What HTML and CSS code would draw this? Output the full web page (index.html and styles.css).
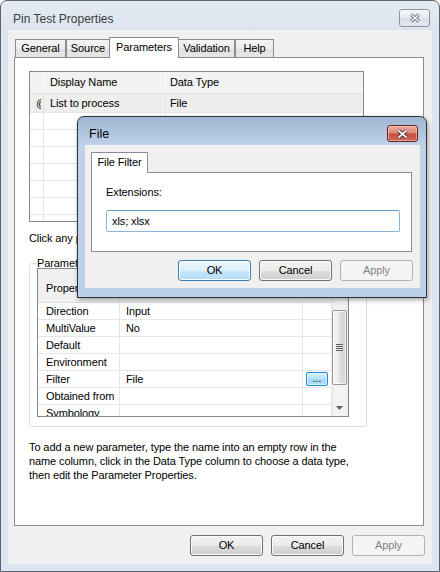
FILE: index.html
```html
<!DOCTYPE html>
<html>
<head>
<meta charset="utf-8">
<title>Pin Test Properties</title>
<link rel="stylesheet" href="styles.css">
</head>
<body>
<div class="window">
  <div class="titlebar">
    <span class="title">Pin Test Properties</span>
    <div class="close-main">
      <svg width="12" height="10" viewBox="0 0 12 10"><path d="M2 1.5 L10 8.5 M10 1.5 L2 8.5" stroke="#6f7780" stroke-width="3.4" fill="none"/><path d="M2 1.5 L10 8.5 M10 1.5 L2 8.5" stroke="#f7f7f7" stroke-width="1.4" fill="none"/></svg>
    </div>
  </div>
  <div class="client">
    <div class="tabs">
      <div class="tab t-general">General</div>
      <div class="tab t-source">Source</div>
      <div class="tab active t-params">Parameters</div>
      <div class="tab t-valid">Validation</div>
      <div class="tab t-help">Help</div>
    </div>
    <div class="panel">
      <div class="ptable">
        <div class="prow head"><div class="c0"></div><div class="c1">Display Name</div><div class="c2">Data Type</div></div>
        <div class="prow sel"><div class="c0"><span class="rowicon">@</span></div><div class="c1">List to process</div><div class="c2">File</div></div>
        <div class="prow"><div class="c0"></div><div class="c1"></div><div class="c2"></div></div>
        <div class="prow"><div class="c0"></div><div class="c1"></div><div class="c2"></div></div>
        <div class="prow"><div class="c0"></div><div class="c1"></div><div class="c2"></div></div>
        <div class="prow"><div class="c0"></div><div class="c1"></div><div class="c2"></div></div>
        <div class="prow"><div class="c0"></div><div class="c1"></div><div class="c2"></div></div>
        <div class="prow"><div class="c0"></div><div class="c1"></div><div class="c2"></div></div>
        <div class="prow"><div class="c0"></div><div class="c1"></div><div class="c2"></div></div>
      </div>
      <div class="hint">Click any parameter above to see its properties below.</div>
      <fieldset class="group">
        <legend>Parameter Properties</legend>
        <div class="pgrid">
          <div class="pg-body">
            <div class="pg-head"><div class="g1">Property</div><div class="g2">Value</div><div class="g3"></div></div>
            <div class="pg-row"><div class="g1">Direction</div><div class="g2">Input</div><div class="g3"></div></div>
            <div class="pg-row"><div class="g1">MultiValue</div><div class="g2">No</div><div class="g3"></div></div>
            <div class="pg-row"><div class="g1">Default</div><div class="g2"></div><div class="g3"></div></div>
            <div class="pg-row"><div class="g1">Environment</div><div class="g2"></div><div class="g3"></div></div>
            <div class="pg-row"><div class="g1">Filter</div><div class="g2">File</div><div class="g3"><span class="ellipsis">...</span></div></div>
            <div class="pg-row"><div class="g1">Obtained from</div><div class="g2"></div><div class="g3"></div></div>
            <div class="pg-row"><div class="g1">Symbology</div><div class="g2"></div><div class="g3"></div></div>
          </div>
          <div class="vscroll">
            <div class="sb-arrow"><svg width="7" height="4" viewBox="0 0 7 4"><path d="M0 4 L3.5 0 L7 4 Z" fill="#606060"/></svg></div>
            <div class="sb-thumb"><div class="grip"></div></div>
            <div class="sb-arrow sb-down"><svg width="7" height="4" viewBox="0 0 7 4"><path d="M0 0 L7 0 L3.5 4 Z" fill="#606060"/></svg></div>
          </div>
        </div>
      </fieldset>
      <p class="help">To add a new parameter, type the name into an empty row in the<br>name column, click in the Data Type column to choose a data type,<br>then edit the Parameter Properties.</p>
    </div>
    <div class="buttons">
      <div class="btn">OK</div>
      <div class="btn">Cancel</div>
      <div class="btn disabled">Apply</div>
    </div>
  </div>
</div>

<div class="dialog">
  <div class="d-title">
    <span class="d-caption">File</span>
    <div class="close-red">
      <svg width="13" height="10" viewBox="0 0 13 10"><path d="M2.5 1.5 L10.5 8.5 M10.5 1.5 L2.5 8.5" stroke="#3b2320" stroke-width="3.6" fill="none"/><path d="M2.5 1.5 L10.5 8.5 M10.5 1.5 L2.5 8.5" stroke="#ffffff" stroke-width="1.7" fill="none"/></svg>
    </div>
  </div>
  <div class="d-client">
    <div class="d-tabs"><div class="tab active t-filter">File Filter</div></div>
    <div class="d-panel">
      <div class="d-label">Extensions:</div>
      <div class="d-input">xls; xlsx</div>
    </div>
    <div class="buttons d-buttons">
      <div class="btn default">OK</div>
      <div class="btn">Cancel</div>
      <div class="btn disabled">Apply</div>
    </div>
  </div>
</div>
</body>
</html>
```

FILE: styles.css
```css
* { box-sizing: border-box; }
html, body { margin: 0; padding: 0; }
body {
  width: 440px; height: 572px; overflow: hidden; position: relative;
  background: #fff;
  font-family: "Liberation Sans", Arial, sans-serif;
  font-size: 11px; color: #000; letter-spacing: -0.1px;
}

/* main window */
.window {
  width: 440px; height: 572px;
  border: 1px solid #5b6470; border-radius: 7px 7px 0 0;
  background: linear-gradient(180deg, #e5ebf2 0, #dbe4ee 30px, #dbe6f2 100%);
  padding: 0 7px 7px;
  display: flex; flex-direction: column;
}
.titlebar { height: 29px; display: flex; justify-content: space-between; align-items: flex-start; }
.title { font-size: 12px; line-height: 14px; color: #3d3d3d; padding: 11px 0 0 5px; letter-spacing: 0; }
.close-main {
  width: 31px; height: 18px; margin: 8px 2px 0 0;
  border: 1px solid #8d97a3; border-radius: 3px;
  background: linear-gradient(#f5f7fa, #e6ebf1 50%, #d9e0e8 51%, #e2e8ee);
  display: flex; align-items: center; justify-content: center;
}
.client {
  flex: 1; background: #f0f0f0;
  padding: 7px 7px 8px 6px;
  display: flex; flex-direction: column;
}

/* tabs */
.tabs { display: flex; height: 20px; padding-left: 1px; position: relative; z-index: 1; }
.tab {
  height: 18px; margin-top: 2px;
  border: 1px solid #898c95; border-bottom: 0;
  background: linear-gradient(#f4f4f4, #ececec 50%, #e0e0e0 50%, #e6e6e6);
  display: flex; align-items: center; justify-content: center;
  line-height: 13px; white-space: nowrap;
}
.tab.active {
  height: 21px; margin-top: 0; margin-left: -1px; margin-right: -1px;
  background: #fff; position: relative; z-index: 2;
  align-items: flex-start; padding-top: 3px;
}
.t-general { width: 51px; }
.t-source { width: 44px; }
.t-params { width: 70px; }
.t-valid { width: 57px; }
.t-help { width: 39px; }

.panel {
  width: 410px; height: 469px;
  border: 1px solid #898c95; background: #fff;
  padding: 13px 0 0 14px;
}

/* parameter table */
.ptable { width: 335px; height: 151px; border: 1px solid #828790; overflow: hidden; background: #fff; }
.prow { display: flex; height: 17px; border-bottom: 1px solid #e6e6e6; }
.prow.head { height: 22px; background: #f2f2f2; border-bottom: 1px solid #e2e2e2; }
.prow.sel { height: 19px; background: #eeeeee; }
.prow > div { display: flex; align-items: center; line-height: 13px; white-space: nowrap; }
.c0 { width: 14px; border-right: 1px solid #e3e3e3; padding-left: 6px; overflow: hidden; }
.c1 { width: 122px; border-right: 1px solid #e3e3e3; padding-left: 6px; }
.c2 { flex: 1; padding-left: 4px; }
.head .c0, .head .c1 { border-right-color: #fbfbfb; }
.rowicon { display: inline-block; width: 5px; overflow: hidden; font-size: 11px; }

.hint { margin-top: 9px; line-height: 14px; white-space: nowrap; }

/* group box */
.group {
  width: 338px; min-width: 0;
  margin: 13px 0 0 0; padding: 0 0 9px 7px;
  border: 1px solid #d5dfe5; border-radius: 3px;
}
.group legend { padding: 0 1px; margin-left: -1px; line-height: 10px; font-size: 11px; white-space: nowrap; }

.pgrid { width: 312px; height: 149px; border: 1px solid #828790; display: flex; overflow: hidden; background: #fff; }
.pg-body { flex: 1; overflow: hidden; }
.pg-head { height: 34px; background: #f0f0f0; display: flex; border-bottom: 1px solid #dedede; }
.pg-head > div { display: flex; align-items: flex-end; padding-bottom: 7px; line-height: 13px; }
.pg-row { height: 17px; display: flex; border-bottom: 1px solid #e6e6e6; }
.pg-row > div { display: flex; align-items: center; line-height: 13px; white-space: nowrap; }
.g1 { width: 82px; padding-left: 8px; border-right: 1px solid #e6e6e6; }
.g2 { width: 183px; padding-left: 6px; border-right: 1px solid #e6e6e6; }
.g3 { flex: 1; justify-content: center; }
.ellipsis {
  width: 22px; height: 14px;
  border: 1px solid #1a8ad8; border-radius: 2px;
  background: linear-gradient(#d8f1fd, #b9e3f9 50%, #9ed6f5 51%, #b2e0f8);
  box-shadow: inset 0 0 0 1px rgba(255,255,255,0.5);
  font-size: 10px; line-height: 10px; text-align: center; letter-spacing: 0;
  display: flex; align-items: center; justify-content: center;
}

.vscroll {
  width: 17px; display: flex; flex-direction: column;
  background: linear-gradient(90deg, #e6e6e6, #f3f3f3 25%, #f3f3f3 80%, #ebebeb);
}
.sb-arrow { height: 17px; display: flex; align-items: center; justify-content: center; flex: none; }
.sb-down { margin-top: auto; }
.sb-thumb {
  margin: 24px 1px 0; height: 75px; flex: none;
  border: 1px solid #979797; border-radius: 2px;
  background: linear-gradient(90deg, #f3f3f3, #ebebeb 45%, #dcdcdc 55%, #d4d4d4);
  box-shadow: inset 0 0 0 1px rgba(255,255,255,0.7);
  display: flex; align-items: center; justify-content: center;
}
.grip { width: 7px; height: 7px; background: repeating-linear-gradient(180deg, #5e5e5e 0 1px, #e8e8e8 1px 2px); }

.help { margin: 13px 0 0; line-height: 14px; white-space: nowrap; }

/* buttons */
.buttons { display: flex; justify-content: flex-end; gap: 8px; margin-top: 9px; }
.btn {
  width: 73px; height: 21px;
  border: 1px solid #707070; border-radius: 3px;
  background: linear-gradient(#f2f2f2, #ebebeb 50%, #dddddd 51%, #cfcfcf);
  box-shadow: inset 0 0 0 1px #fbfbfb;
  display: flex; align-items: center; justify-content: center;
  line-height: 13px;
}
.btn.disabled { border-color: #adb2b5; background: #f4f4f4; color: #838383; box-shadow: none; }
.btn.default {
  border-color: #3c7fb1;
  background: linear-gradient(#ebf6fd, #dcf0fc 50%, #c5e6f9 51%, #b3ddf6);
  box-shadow: inset 0 0 0 1px #ffffff;
}

/* File dialog */
.dialog {
  position: absolute; left: 77px; top: 116px;
  width: 350px; height: 182px;
  border: 1px solid #2b3136; border-radius: 7px 7px 0 0;
  background: linear-gradient(180deg, #a0b8d4 0, #b2c8e1 18px, #bfd2e8 29px, #bcd0e7 100%);
  padding: 0 6px 9px 7px;
  display: flex; flex-direction: column;
  box-shadow: 1px 2px 5px rgba(0,0,0,0.35);
}
.d-title { height: 28px; display: flex; justify-content: space-between; align-items: flex-start; flex: none; }
.d-caption { font-size: 12.5px; line-height: 14px; padding: 10px 0 0 4px; letter-spacing: 0; }
.close-red {
  width: 31px; height: 17px; margin: 8px 2px 0 0;
  border: 1px solid #6b241d; border-radius: 3px;
  background: linear-gradient(#e9a99c, #dc8a79 45%, #c7503f 52%, #c86a58);
  box-shadow: inset 0 0 0 1px rgba(255,220,210,0.5);
  display: flex; align-items: center; justify-content: center;
}
.d-client { flex: 1; background: #f0f0f0; padding: 7px 7px 0 6px; display: flex; flex-direction: column; }
.d-tabs { display: flex; height: 20px; padding-left: 1px; position: relative; z-index: 1; }
.t-filter { width: 57px; }
.d-panel {
  width: 321px; height: 80px;
  border: 1px solid #898c95; background: #fff;
  padding: 12px 0 0 14px;
}
.d-label { line-height: 14px; }
.d-input {
  width: 294px; height: 22px; margin-top: 11px;
  border: 1px solid #8db6dc; border-top-color: #6d9ac6;
  border-radius: 2px;
  padding-left: 5px;
  display: flex; align-items: center; line-height: 13px;
}
.d-buttons { margin-top: 8px; }
```
